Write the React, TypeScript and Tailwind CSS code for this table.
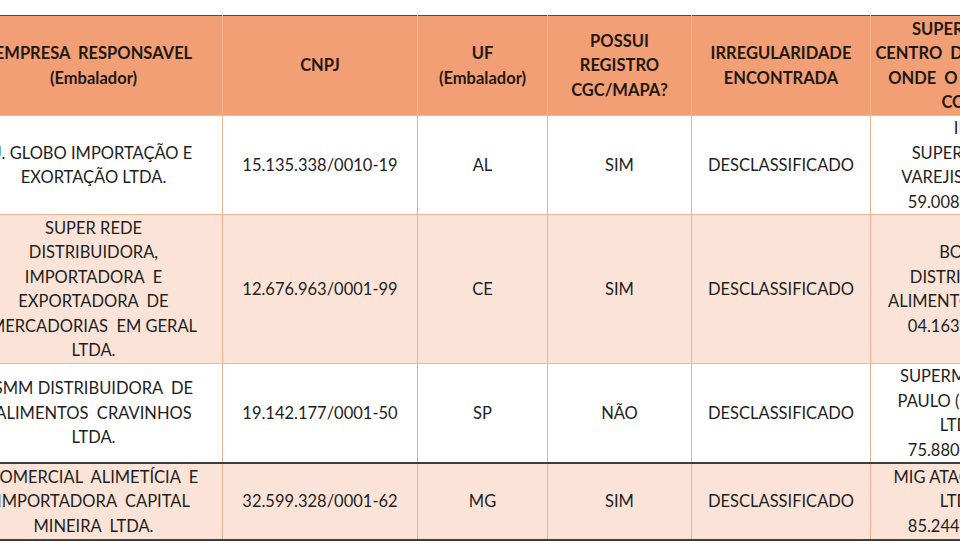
import React from 'react'

type Row = {
  bg: string
  h: string
  topDark?: boolean
  cells: string[][]
}

const header: string[][] = [
  ['EMPRESA  RESPONSAVEL', '(Embalador)'],
  ['CNPJ'],
  ['UF', '(Embalador)'],
  ['POSSUI', 'REGISTRO', 'CGC/MAPA?'],
  ['IRREGULARIDADE', 'ENCONTRADA'],
  ['SUPERMERCADO /', 'CENTRO  DE  DISTRIBUIÇÃO', 'ONDE  O  PRODUTO  FOI', 'COLETADO'],
]

const rows: Row[] = [
  {
    bg: 'bg-white',
    h: 'h-[99px]',
    cells: [
      ['J. GLOBO IMPORTAÇÃO E', 'EXORTAÇÃO LTDA.'],
      ['15.135.338/0010-19'],
      ['AL'],
      ['SIM'],
      ['DESCLASSIFICADO'],
      ['IRMÃOS', 'SUPERMERCADO E', 'VAREJISTA LTDA. - ME', '59.008.214/0001-40'],
    ],
  },
  {
    bg: 'bg-[#fbe4d7]',
    h: 'h-[149px]',
    cells: [
      ['SUPER REDE', 'DISTRIBUIDORA,', 'IMPORTADORA  E', 'EXPORTADORA  DE', 'MERCADORIAS  EM GERAL', 'LTDA.'],
      ['12.676.963/0001-99'],
      ['CE'],
      ['SIM'],
      ['DESCLASSIFICADO'],
      ['BOMPREÇO', 'DISTRIBUIDORA DE', 'ALIMENTOS LTDA. - CNPJ', '04.163.275/0001-08'],
    ],
  },
  {
    bg: 'bg-white',
    h: 'h-[97px]',
    cells: [
      ['SMM DISTRIBUIDORA  DE', 'ALIMENTOS  CRAVINHOS', 'LTDA.'],
      ['19.142.177/0001-50'],
      ['SP'],
      ['NÃO'],
      ['DESCLASSIFICADO'],
      ['SUPERMERCADO SÃO', 'PAULO (IRMÃOS SILVA)', 'LTDA. CNPJ:', '75.880.116/0001-27'],
    ],
  },
  {
    bg: 'bg-[#fbe4d7]',
    h: 'h-[77px]',
    topDark: true,
    cells: [
      ['COMERCIAL  ALIMETÍCIA  E', 'IMPORTADORA  CAPITAL', 'MINEIRA  LTDA.'],
      ['32.599.328/0001-62'],
      ['MG'],
      ['SIM'],
      ['DESCLASSIFICADO'],
      ['MIG ATACADISTA EIRELI', 'LTDA. CNPJ:', '85.244.918/0001-33'],
    ],
  },
]

const widths = ['w-[258px]', 'w-[195px]', 'w-[130px]', 'w-[144px]', 'w-[179px]', 'w-[230px]']

function Lines({ lines }: { lines: string[] }) {
  return (
    <>
      {lines.map((l, i) => (
        <div key={i} className="whitespace-pre">
          {l}
        </div>
      ))}
    </>
  )
}

export default function App() {
  return (
    <div className="h-[554px] w-[960px] overflow-hidden bg-white pt-[15px] font-['Lato','Liberation_Sans',sans-serif] text-[16.5px] leading-[24.5px] text-[#1e1e1e]">
      <table className="-ml-[36px] w-[1136px] min-w-[1136px] table-fixed border-collapse">
        <colgroup>
          {widths.map((w, i) => (
            <col key={i} className={w} />
          ))}
        </colgroup>
        <thead>
          <tr className="h-[100px] border-t border-[#4a4a4a] bg-[#f29f76]">
            {header.map((c, i) => (
              <th
                key={i}
                className="overflow-hidden border-x border-[#f5b491] p-0 text-center align-middle font-bold text-[#231811]"
              >
                <Lines lines={c} />
              </th>
            ))}
          </tr>
        </thead>
        <tbody>
          {rows.map((r, ri) => (
            <tr
              key={ri}
              className={`${r.h} ${r.bg} ${r.topDark ? 'border-t-2 border-t-[#3d3d3d]' : 'border-t border-t-[#f1b696]'} ${ri === rows.length - 1 ? 'border-b-2 border-b-[#3d3d3d]' : ''}`}
            >
              {r.cells.map((c, ci) => (
                <td
                  key={ci}
                  className={`overflow-hidden p-0 text-center align-middle ${ci === 1 && r.bg === 'bg-white' ? 'border-x border-x-[#d3b3a2]' : 'border-x border-x-[#efb392]'}`}
                >
                  <Lines lines={c} />
                </td>
              ))}
            </tr>
          ))}
        </tbody>
      </table>
    </div>
  )
}
